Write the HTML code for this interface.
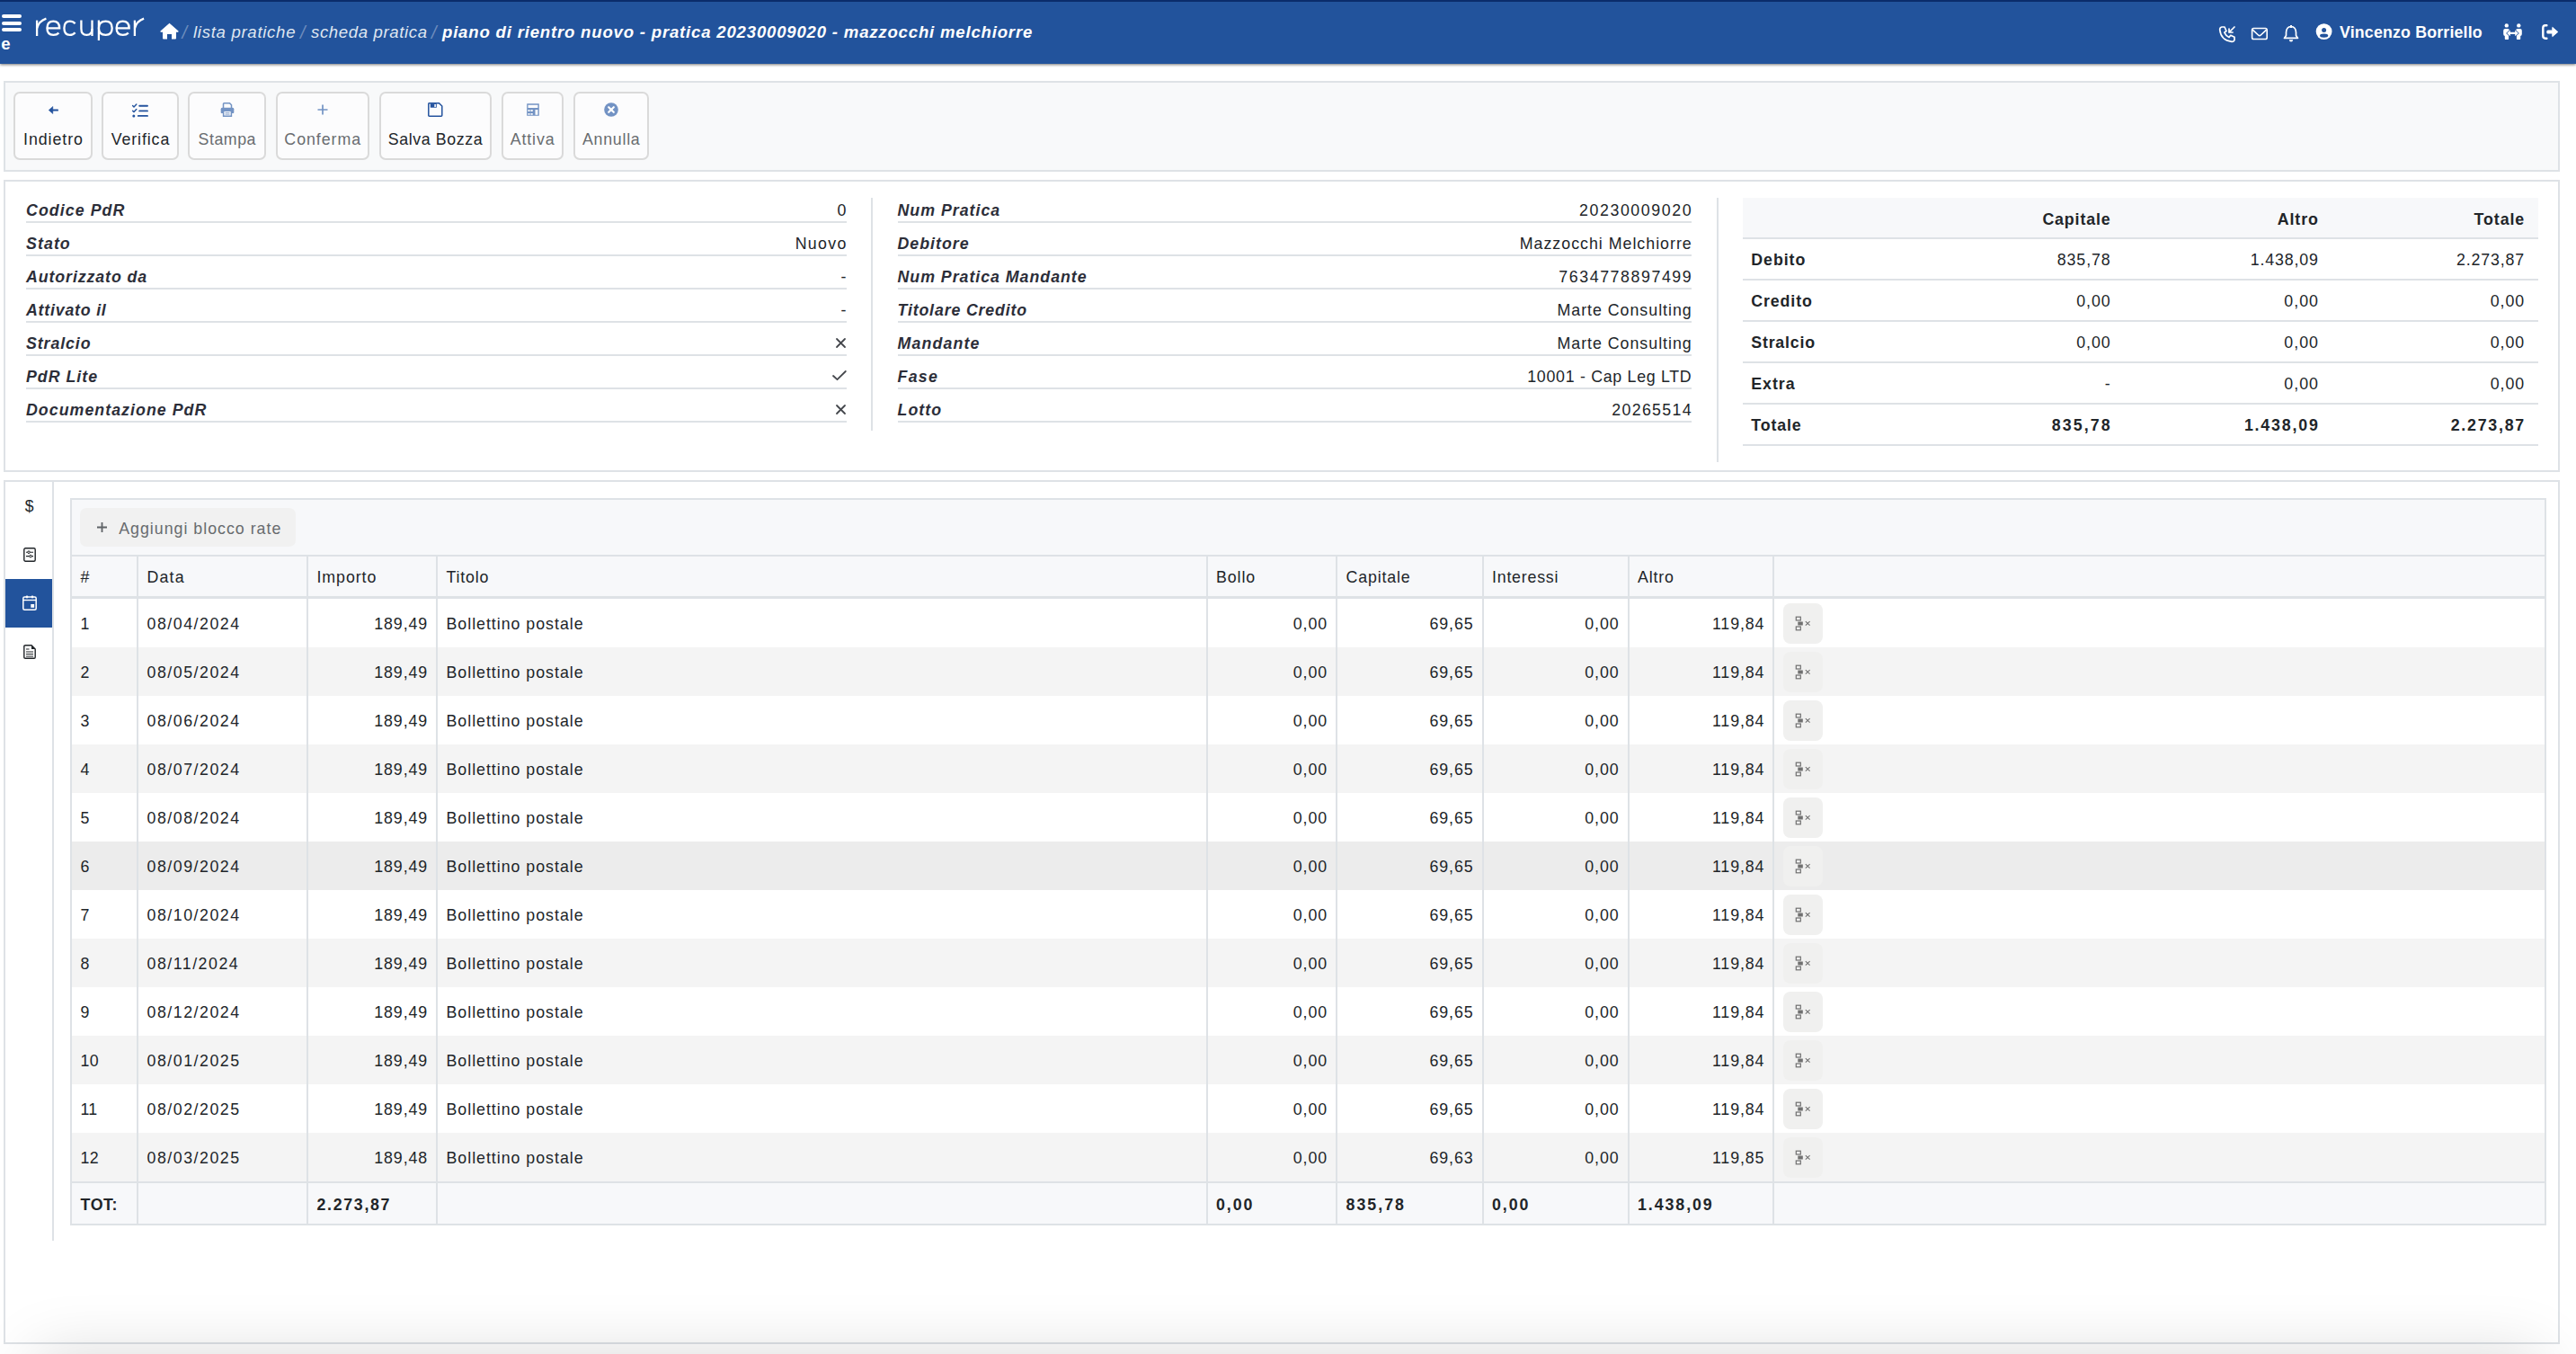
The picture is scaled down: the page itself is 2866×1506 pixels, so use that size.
<!DOCTYPE html>
<html><head><meta charset="utf-8"><title>recuper</title>
<style>
html,body{margin:0;padding:0;width:2866px;height:1506px;overflow:hidden;background:#fff;}
body{position:relative;font-family:"Liberation Sans",sans-serif;}
.t{position:absolute;line-height:1;white-space:nowrap;}
.r{position:absolute;}
.i{position:absolute;overflow:visible;}
@media (max-width:1500px){html{zoom:0.5;}}
</style></head><body>
<div class="r" style="left:0px;top:0px;width:2866px;height:71px;background:#22539c;box-shadow:0 1px 3px rgba(0,0,0,.55);z-index:2"></div>
<div class="r" style="left:0px;top:0px;width:2866px;height:1.5px;background:#0b2c6b;z-index:3"></div>
<div class="r" style="left:2px;top:16px;width:22px;height:4px;background:#fff;border-radius:2px;z-index:3"></div>
<div class="r" style="left:2px;top:24px;width:22px;height:4px;background:#fff;border-radius:2px;z-index:3"></div>
<div class="r" style="left:2px;top:31px;width:22px;height:4px;background:#fff;border-radius:2px;z-index:3"></div>
<div class="t" style="left:1.20px;top:38px;line-height:21px;font-size:18.5px;color:#fff;font-weight:bold;font-style:normal;letter-spacing:0.00px;z-index:3">e</div>
<svg class="i" style="left:0;top:0;z-index:3" width="200" height="60" viewBox="0 0 200 60"><g fill="none" stroke="#fff" stroke-width="2.3" stroke-linecap="butt"><path d="M41.1 40 L41.1 22.6"/><path d="M41.1 31.5 Q43 23.5 51.4 20.6"/><path d="M52.4 31.4 L66.2 31.4 Q66.2 23.6 59.3 23.6 Q52.4 23.6 52.4 31.3 Q52.4 38.9 59.4 38.9 Q63.2 38.9 65.4 36.6"/><path d="M83.6 26.3 Q81.4 23.6 77.6 23.6 Q71.4 23.6 71.4 31.25 Q71.4 38.9 77.6 38.9 Q81.4 38.9 83.6 36.2"/><path d="M90.4 22.5 L90.4 32 Q90.4 38.9 96.4 38.9 Q102.4 38.9 102.4 32"/><path d="M102.5 22.5 L102.5 40"/><path d="M109.9 22.5 L109.9 45"/><path d="M109.9 31.25 Q109.9 23.6 117.6 23.6 Q124.7 23.6 124.7 31.25 Q124.7 38.9 117.6 38.9 Q109.9 38.9 109.9 31.25"/><path d="M129.6 31.4 L143.7 31.4 Q143.7 23.6 136.6 23.6 Q129.6 23.6 129.6 31.3 Q129.6 38.9 136.7 38.9 Q140.6 38.9 142.8 36.6"/><path d="M149.9 40 L149.9 22.6"/><path d="M149.9 31.5 Q151.8 23.5 160.1 20.6"/></g></svg>
<svg class="i" style="left:178px;top:25px;z-index:3" width="21" height="19" viewBox="0 0 21 19"><path d="M10.5 0.8 L20.5 9.6 Q21 10.6 20 10.8 L18 10.8 L18 17.6 Q18 18.6 17 18.6 L13 18.6 L13 13 L8 13 L8 18.6 L4 18.6 Q3 18.6 3 17.6 L3 10.8 L1 10.8 Q0 10.6 0.5 9.6 Z" fill="#fff"/></svg>
<div class="t" style="left:202.50px;top:25px;line-height:22px;font-size:20px;color:rgba(255,255,255,0.35);font-weight:normal;font-style:italic;letter-spacing:0.00px;z-index:3">/</div>
<div class="t" style="left:215.00px;top:25px;line-height:21px;font-size:18.6px;color:#dfe6f1;font-weight:normal;font-style:italic;letter-spacing:0.70px;z-index:3">lista pratiche</div>
<div class="t" style="left:334.00px;top:25px;line-height:22px;font-size:20px;color:rgba(255,255,255,0.35);font-weight:normal;font-style:italic;letter-spacing:0.00px;z-index:3">/</div>
<div class="t" style="left:346.00px;top:25px;line-height:21px;font-size:18.6px;color:#dfe6f1;font-weight:normal;font-style:italic;letter-spacing:0.62px;z-index:3">scheda pratica</div>
<div class="t" style="left:480.00px;top:25px;line-height:22px;font-size:20px;color:rgba(255,255,255,0.35);font-weight:normal;font-style:italic;letter-spacing:0.00px;z-index:3">/</div>
<div class="t" style="left:492.00px;top:25px;line-height:21px;font-size:18.6px;color:#fff;font-weight:bold;font-style:italic;letter-spacing:0.80px;z-index:3">piano di rientro nuovo - pratica 20230009020 - mazzocchi melchiorre</div>
<svg class="i" style="left:2468px;top:28px;z-index:3" width="20" height="20" viewBox="0 0 20 20"><path d="M4 2 L7 2 L9 6.5 L6.8 8.2 Q8.5 12 12 13.6 L13.8 11.3 L18 13.2 L18 16.5 Q17.5 18.5 15 18.3 Q3 17 1.7 5 Q1.6 2.5 4 2 Z" fill="none" stroke="#fff" stroke-width="1.7" stroke-linejoin="round"/><path d="M18 2 L12 8 M12 4 L12 8 L16 8" fill="none" stroke="#fff" stroke-width="1.7" stroke-linecap="round" stroke-linejoin="round"/></svg>
<svg class="i" style="left:2504px;top:30px;z-index:3" width="20" height="15" viewBox="0 0 20 15"><rect x="1.6" y="1.5" width="16.6" height="12" rx="1.8" fill="none" stroke="#fff" stroke-width="1.6"/><path d="M2.2 3.2 L8.5 9 Q9.9 10.3 11.3 9 L17.6 3.2" fill="none" stroke="#fff" stroke-width="1.6"/></svg>
<svg class="i" style="left:2540px;top:28px;z-index:3" width="18" height="19" viewBox="0 0 18 19"><path d="M9 1.5 Q14.2 1.8 14.5 8 L14.5 11.5 L16.5 14.4 L1.5 14.4 L3.5 11.5 L3.5 8 Q3.8 1.8 9 1.5 Z" fill="none" stroke="#fff" stroke-width="1.7" stroke-linejoin="round"/><path d="M6.8 16.2 L11.2 16.2 Q11 18.6 9 18.6 Q7 18.6 6.8 16.2 Z" fill="#fff"/><rect x="8" y="0" width="2" height="3" fill="#fff"/></svg>
<svg class="i" style="left:2576px;top:26px;z-index:3" width="19" height="19" viewBox="0 0 19 19"><circle cx="9.6" cy="9.1" r="8.9" fill="#fff"/><circle cx="9.6" cy="7.4" r="2.5" fill="#22539c"/><ellipse cx="9.6" cy="13.6" rx="4.6" ry="2.2" fill="#22539c"/></svg>
<div class="t" style="left:2603.00px;top:26px;line-height:20px;font-size:17.8px;color:#fff;font-weight:bold;font-style:normal;letter-spacing:0.17px;z-index:3">Vincenzo Borriello</div>
<svg class="i" style="left:2784px;top:26px;z-index:3" width="23" height="19" viewBox="0 0 23 19"><circle cx="4.8" cy="2.4" r="2.2" fill="#fff"/><circle cx="18.3" cy="2.4" r="2.2" fill="#fff"/><rect x="1.2" y="6" width="6.8" height="8" rx="2" fill="#fff"/><rect x="2.8" y="10" width="4.3" height="8.1" rx="0.8" fill="#fff"/><rect x="15" y="6" width="6.8" height="8" rx="2" fill="#fff"/><rect x="15.9" y="10" width="4.3" height="8.1" rx="0.8" fill="#fff"/><path d="M5.1 10.9 L8.8 7.6 L8.8 9.8 L14.2 9.8 L14.2 7.6 L17.9 10.9 L14.2 14.2 L14.2 12 L8.8 12 L8.8 14.2 Z" fill="#fff" stroke="#22539c" stroke-width="1.4" stroke-linejoin="round" paint-order="stroke"/></svg>
<svg class="i" style="left:2827px;top:27px;z-index:3" width="20" height="17" viewBox="0 0 20 17"><path d="M6.4 1.3 L4.9 1.3 Q2.3 1.3 2.3 3.9 L2.3 13.1 Q2.3 15.7 4.9 15.7 L6.4 15.7" fill="none" stroke="#fff" stroke-width="2.4" stroke-linecap="round"/><path d="M12.8 3.4 L18.8 8.5 L12.8 13.6 Z" fill="#fff" stroke="#fff" stroke-width="1" stroke-linejoin="round"/><rect x="6.3" y="6.5" width="7" height="4" rx="1.5" fill="#fff"/></svg>
<div class="r" style="left:4px;top:90px;width:2844px;height:101px;background:#f8f9fa;box-sizing:border-box;border:2px solid #dee2e6"></div>
<div class="r" style="left:15px;top:102px;width:88px;height:76px;background:#fcfcfd;box-sizing:border-box;border:2px solid #dadada;border-radius:7px"></div>
<div class="t" style="left:-440.54px;width:1000px;text-align:center;top:145px;line-height:20px;font-size:17.8px;color:#212529;font-weight:normal;font-style:normal;letter-spacing:0.93px;">Indietro</div>
<svg class="i" style="left:54px;top:118px;" width="11" height="9" viewBox="0 0 11 9"><path d="M0.2 4.5 L4.8 0.4 L4.8 8.6 Z" fill="#24539e" stroke="#24539e" stroke-width="0.5" stroke-linejoin="round"/><rect x="4" y="3.4" width="6.9" height="2.2" rx="0.6" fill="#24539e"/></svg>
<div class="r" style="left:113px;top:102px;width:86px;height:76px;background:#fcfcfd;box-sizing:border-box;border:2px solid #dadada;border-radius:7px"></div>
<div class="t" style="left:-343.55px;width:1000px;text-align:center;top:145px;line-height:20px;font-size:17.8px;color:#212529;font-weight:normal;font-style:normal;letter-spacing:0.89px;">Verifica</div>
<svg class="i" style="left:147px;top:115px;" width="18" height="16" viewBox="0 0 18 16"><path d="M0.6 2.6 L2 4 L4.8 1" fill="none" stroke="#24539e" stroke-width="1.4" stroke-linecap="round" stroke-linejoin="round"/><path d="M0.6 8.2 L2 9.6 L4.8 6.6" fill="none" stroke="#24539e" stroke-width="1.4" stroke-linecap="round" stroke-linejoin="round"/><circle cx="1.8" cy="13.9" r="1.5" fill="#24539e"/><path d="M8.2 2.8 L17 2.8 M8.2 8.4 L17 8.4 M6.8 13.9 L17 13.9" stroke="#24539e" stroke-width="1.9" stroke-linecap="round"/></svg>
<div class="r" style="left:209px;top:102px;width:87px;height:76px;background:#fcfcfd;box-sizing:border-box;border:2px solid #dadada;border-radius:7px"></div>
<div class="t" style="left:-247.23px;width:1000px;text-align:center;top:145px;line-height:20px;font-size:17.8px;color:#696c70;font-weight:normal;font-style:normal;letter-spacing:0.55px;">Stampa</div>
<svg class="i" style="left:244.5px;top:114px;" width="16" height="16" viewBox="0 0 16 16"><path d="M3.5 6 L3.5 1.7 Q3.5 0.8 4.4 0.8 L10.5 0.8 L12.5 2.8 L12.5 6" fill="none" stroke="#7393c4" stroke-width="1.5"/><path d="M3.5 12 L1.5 12 Q0.7 12 0.7 11 L0.7 7.2 Q0.7 5.7 2.2 5.7 L13.8 5.7 Q15.3 5.7 15.3 7.2 L15.3 11 Q15.3 12 14.5 12 L12.5 12" fill="#7393c4"/><rect x="3.6" y="9.2" width="8.8" height="6" fill="#fcfcfd" stroke="#7393c4" stroke-width="1.5"/><path d="M5.5 11.5 L10.5 11.5 M5.5 13.2 L10.5 13.2" stroke="#7393c4" stroke-width="0.8"/></svg>
<div class="r" style="left:306.5px;top:102px;width:104.5px;height:76px;background:#fcfcfd;box-sizing:border-box;border:2px solid #dadada;border-radius:7px"></div>
<div class="t" style="left:-140.77px;width:1000px;text-align:center;top:145px;line-height:20px;font-size:17.8px;color:#696c70;font-weight:normal;font-style:normal;letter-spacing:0.96px;">Conferma</div>
<svg class="i" style="left:353px;top:116px;" width="12" height="12" viewBox="0 0 12 12"><path d="M6 0.5 L6 11.5 M0.5 6 L11.5 6" stroke="#7393c4" stroke-width="1.7"/></svg>
<div class="r" style="left:421.7px;top:102px;width:125.00000000000006px;height:76px;background:#fcfcfd;box-sizing:border-box;border:2px solid #dadada;border-radius:7px"></div>
<div class="t" style="left:-15.51px;width:1000px;text-align:center;top:145px;line-height:20px;font-size:17.8px;color:#212529;font-weight:normal;font-style:normal;letter-spacing:0.59px;">Salva Bozza</div>
<svg class="i" style="left:476px;top:114px;" width="17" height="16" viewBox="0 0 17 16"><path d="M1.5 0.8 L12.5 0.8 L15.8 4 L15.8 14.2 Q15.8 15.2 14.8 15.2 L1.8 15.2 Q0.8 15.2 0.8 14.2 L0.8 1.8 Q0.8 0.8 1.5 0.8 Z" fill="none" stroke="#24539e" stroke-width="1.5"/><rect x="2.8" y="1.2" width="7" height="4.5" fill="#24539e"/><rect x="7.3" y="2" width="1.6" height="3" fill="#fcfcfd"/></svg>
<div class="r" style="left:557.6px;top:102px;width:69.10000000000002px;height:76px;background:#fcfcfd;box-sizing:border-box;border:2px solid #dadada;border-radius:7px"></div>
<div class="t" style="left:92.59px;width:1000px;text-align:center;top:145px;line-height:20px;font-size:17.8px;color:#696c70;font-weight:normal;font-style:normal;letter-spacing:0.88px;">Attiva</div>
<svg class="i" style="left:585.5px;top:115px;" width="14" height="14" viewBox="0 0 14 14"><path fill-rule="evenodd" fill="#7393c4" d="M0.6 0.2 L13.4 0.2 Q13.8 0.2 13.8 0.6 L13.8 13.4 Q13.8 13.8 13.4 13.8 L0.6 13.8 Q0.2 13.8 0.2 13.4 L0.2 0.6 Q0.2 0.2 0.6 0.2 Z M1.5 1.8 L12.4 1.8 L12.4 5 L1.5 5 Z M1.5 7 L3.5 7 L3.5 9 L1.5 9 Z M4.5 7 L6.7 7 L6.7 9 L4.5 9 Z M1.5 10.9 L3.5 10.9 L3.5 12.7 L1.5 12.7 Z M4.5 10.9 L6.7 10.9 L6.7 12.7 L4.5 12.7 Z M9.5 7 L12.4 7 L12.4 12.7 L9.5 12.7 Z"/></svg>
<div class="r" style="left:637.6px;top:102px;width:84.60000000000002px;height:76px;background:#fcfcfd;box-sizing:border-box;border:2px solid #dadada;border-radius:7px"></div>
<div class="t" style="left:180.26px;width:1000px;text-align:center;top:145px;line-height:20px;font-size:17.8px;color:#696c70;font-weight:normal;font-style:normal;letter-spacing:0.73px;">Annulla</div>
<svg class="i" style="left:672px;top:114px;" width="16" height="16" viewBox="0 0 16 16"><circle cx="8" cy="8" r="7.8" fill="#7393c4"/><path d="M5.2 5.2 L10.8 10.8 M10.8 5.2 L5.2 10.8" stroke="#fff" stroke-width="2.2" stroke-linecap="round"/></svg>
<div class="r" style="left:4px;top:200px;width:2844px;height:325px;background:#fff;box-sizing:border-box;border:2px solid #dee2e6"></div>
<div class="t" style="left:29.00px;top:224px;line-height:20px;font-size:17.8px;color:#2c2e39;font-weight:bold;font-style:italic;letter-spacing:1.06px;">Codice PdR</div>
<div class="r" style="left:29px;top:246px;width:913px;height:2px;background:#dee2e6;"></div>
<div class="t" style="right:1924.50px;top:224px;line-height:20px;font-size:17.8px;color:#212529;font-weight:normal;font-style:normal;letter-spacing:0.00px;">0</div>
<div class="t" style="left:29.00px;top:261px;line-height:20px;font-size:17.8px;color:#2c2e39;font-weight:bold;font-style:italic;letter-spacing:1.07px;">Stato</div>
<div class="r" style="left:29px;top:283px;width:913px;height:2px;background:#dee2e6;"></div>
<div class="t" style="right:1923.13px;top:261px;line-height:20px;font-size:17.8px;color:#212529;font-weight:normal;font-style:normal;letter-spacing:1.37px;">Nuovo</div>
<div class="t" style="left:29.00px;top:298px;line-height:20px;font-size:17.8px;color:#2c2e39;font-weight:bold;font-style:italic;letter-spacing:0.90px;">Autorizzato da</div>
<div class="r" style="left:29px;top:320px;width:913px;height:2px;background:#dee2e6;"></div>
<div class="t" style="right:1924.50px;top:298px;line-height:20px;font-size:17.8px;color:#212529;font-weight:normal;font-style:normal;letter-spacing:0.00px;">-</div>
<div class="t" style="left:29.00px;top:335px;line-height:20px;font-size:17.8px;color:#2c2e39;font-weight:bold;font-style:italic;letter-spacing:0.78px;">Attivato il</div>
<div class="r" style="left:29px;top:357px;width:913px;height:2px;background:#dee2e6;"></div>
<div class="t" style="right:1924.50px;top:335px;line-height:20px;font-size:17.8px;color:#212529;font-weight:normal;font-style:normal;letter-spacing:0.00px;">-</div>
<div class="t" style="left:29.00px;top:372px;line-height:20px;font-size:17.8px;color:#2c2e39;font-weight:bold;font-style:italic;letter-spacing:0.90px;">Stralcio</div>
<div class="r" style="left:29px;top:394px;width:913px;height:2px;background:#dee2e6;"></div>
<svg class="i" style="left:930px;top:375.7px;" width="11" height="11" viewBox="0 0 11 11"><path d="M1 1 L10 10 M10 1 L1 10" stroke="#45484d" stroke-width="1.8" stroke-linecap="round"/></svg>
<div class="t" style="left:29.00px;top:409px;line-height:20px;font-size:17.8px;color:#2c2e39;font-weight:bold;font-style:italic;letter-spacing:0.99px;">PdR Lite</div>
<div class="r" style="left:29px;top:431px;width:913px;height:2px;background:#dee2e6;"></div>
<svg class="i" style="left:926px;top:412.2px;" width="16" height="12" viewBox="0 0 16 12"><path d="M1 6 L5.5 10.2 L14.8 1" fill="none" stroke="#45484d" stroke-width="1.8" stroke-linecap="round" stroke-linejoin="round"/></svg>
<div class="t" style="left:29.00px;top:446px;line-height:20px;font-size:17.8px;color:#2c2e39;font-weight:bold;font-style:italic;letter-spacing:1.03px;">Documentazione PdR</div>
<div class="r" style="left:29px;top:468px;width:913px;height:2px;background:#dee2e6;"></div>
<svg class="i" style="left:930px;top:449.7px;" width="11" height="11" viewBox="0 0 11 11"><path d="M1 1 L10 10 M10 1 L1 10" stroke="#45484d" stroke-width="1.8" stroke-linecap="round"/></svg>
<div class="r" style="left:968.5px;top:220px;width:2.0px;height:259px;background:#dee2e6;"></div>
<div class="t" style="left:998.50px;top:224px;line-height:20px;font-size:17.8px;color:#2c2e39;font-weight:bold;font-style:italic;letter-spacing:1.00px;">Num Pratica</div>
<div class="r" style="left:998.5px;top:246px;width:883.5px;height:2px;background:#dee2e6;"></div>
<div class="t" style="right:982.70px;top:224px;line-height:20px;font-size:17.8px;color:#212529;font-weight:normal;font-style:normal;letter-spacing:1.60px;">20230009020</div>
<div class="t" style="left:998.50px;top:261px;line-height:20px;font-size:17.8px;color:#2c2e39;font-weight:bold;font-style:italic;letter-spacing:0.99px;">Debitore</div>
<div class="r" style="left:998.5px;top:283px;width:883.5px;height:2px;background:#dee2e6;"></div>
<div class="t" style="right:983.30px;top:261px;line-height:20px;font-size:17.8px;color:#212529;font-weight:normal;font-style:normal;letter-spacing:1.00px;">Mazzocchi Melchiorre</div>
<div class="t" style="left:998.50px;top:298px;line-height:20px;font-size:17.8px;color:#2c2e39;font-weight:bold;font-style:italic;letter-spacing:0.97px;">Num Pratica Mandante</div>
<div class="r" style="left:998.5px;top:320px;width:883.5px;height:2px;background:#dee2e6;"></div>
<div class="t" style="right:982.73px;top:298px;line-height:20px;font-size:17.8px;color:#212529;font-weight:normal;font-style:normal;letter-spacing:1.57px;">7634778897499</div>
<div class="t" style="left:998.50px;top:335px;line-height:20px;font-size:17.8px;color:#2c2e39;font-weight:bold;font-style:italic;letter-spacing:0.84px;">Titolare Credito</div>
<div class="r" style="left:998.5px;top:357px;width:883.5px;height:2px;background:#dee2e6;"></div>
<div class="t" style="right:983.31px;top:335px;line-height:20px;font-size:17.8px;color:#212529;font-weight:normal;font-style:normal;letter-spacing:0.99px;">Marte Consulting</div>
<div class="t" style="left:998.50px;top:372px;line-height:20px;font-size:17.8px;color:#2c2e39;font-weight:bold;font-style:italic;letter-spacing:1.14px;">Mandante</div>
<div class="r" style="left:998.5px;top:394px;width:883.5px;height:2px;background:#dee2e6;"></div>
<div class="t" style="right:983.31px;top:372px;line-height:20px;font-size:17.8px;color:#212529;font-weight:normal;font-style:normal;letter-spacing:0.99px;">Marte Consulting</div>
<div class="t" style="left:998.50px;top:409px;line-height:20px;font-size:17.8px;color:#2c2e39;font-weight:bold;font-style:italic;letter-spacing:1.30px;">Fase</div>
<div class="r" style="left:998.5px;top:431px;width:883.5px;height:2px;background:#dee2e6;"></div>
<div class="t" style="right:983.59px;top:409px;line-height:20px;font-size:17.8px;color:#212529;font-weight:normal;font-style:normal;letter-spacing:0.71px;">10001 - Cap Leg LTD</div>
<div class="t" style="left:998.50px;top:446px;line-height:20px;font-size:17.8px;color:#2c2e39;font-weight:bold;font-style:italic;letter-spacing:1.06px;">Lotto</div>
<div class="r" style="left:998.5px;top:468px;width:883.5px;height:2px;background:#dee2e6;"></div>
<div class="t" style="right:982.96px;top:446px;line-height:20px;font-size:17.8px;color:#212529;font-weight:normal;font-style:normal;letter-spacing:1.34px;">20265514</div>
<div class="r" style="left:1910px;top:220px;width:2px;height:294px;background:#dee2e6;"></div>
<div class="r" style="left:1939px;top:220px;width:884.5px;height:44px;background:#f7f8fa;"></div>
<div class="r" style="left:1939px;top:264px;width:884.5px;height:2px;background:#dee2e6;"></div>
<div class="t" style="right:517.42px;top:234px;line-height:20px;font-size:17.8px;color:#212529;font-weight:bold;font-style:normal;letter-spacing:0.88px;">Capitale</div>
<div class="t" style="right:286.18px;top:234px;line-height:20px;font-size:17.8px;color:#212529;font-weight:bold;font-style:normal;letter-spacing:0.92px;">Altro</div>
<div class="t" style="right:56.89px;top:234px;line-height:20px;font-size:17.8px;color:#212529;font-weight:bold;font-style:normal;letter-spacing:0.91px;">Totale</div>
<div class="t" style="left:1948.30px;top:279px;line-height:20px;font-size:17.8px;color:#212529;font-weight:bold;font-style:normal;letter-spacing:0.94px;">Debito</div>
<div class="t" style="right:517.37px;top:279px;line-height:20px;font-size:17.8px;color:#212529;font-weight:normal;font-style:normal;letter-spacing:0.93px;">835,78</div>
<div class="t" style="right:286.26px;top:279px;line-height:20px;font-size:17.8px;color:#212529;font-weight:normal;font-style:normal;letter-spacing:0.84px;">1.438,09</div>
<div class="t" style="right:56.96px;top:279px;line-height:20px;font-size:17.8px;color:#212529;font-weight:normal;font-style:normal;letter-spacing:0.84px;">2.273,87</div>
<div class="r" style="left:1939px;top:310px;width:884.5px;height:2px;background:#dee2e6;"></div>
<div class="t" style="left:1948.30px;top:325px;line-height:20px;font-size:17.8px;color:#212529;font-weight:bold;font-style:normal;letter-spacing:0.89px;">Credito</div>
<div class="t" style="right:517.32px;top:325px;line-height:20px;font-size:17.8px;color:#212529;font-weight:normal;font-style:normal;letter-spacing:0.98px;">0,00</div>
<div class="t" style="right:286.12px;top:325px;line-height:20px;font-size:17.8px;color:#212529;font-weight:normal;font-style:normal;letter-spacing:0.98px;">0,00</div>
<div class="t" style="right:56.82px;top:325px;line-height:20px;font-size:17.8px;color:#212529;font-weight:normal;font-style:normal;letter-spacing:0.98px;">0,00</div>
<div class="r" style="left:1939px;top:356px;width:884.5px;height:2px;background:#dee2e6;"></div>
<div class="t" style="left:1948.30px;top:371px;line-height:20px;font-size:17.8px;color:#212529;font-weight:bold;font-style:normal;letter-spacing:0.79px;">Stralcio</div>
<div class="t" style="right:517.32px;top:371px;line-height:20px;font-size:17.8px;color:#212529;font-weight:normal;font-style:normal;letter-spacing:0.98px;">0,00</div>
<div class="t" style="right:286.12px;top:371px;line-height:20px;font-size:17.8px;color:#212529;font-weight:normal;font-style:normal;letter-spacing:0.98px;">0,00</div>
<div class="t" style="right:56.82px;top:371px;line-height:20px;font-size:17.8px;color:#212529;font-weight:normal;font-style:normal;letter-spacing:0.98px;">0,00</div>
<div class="r" style="left:1939px;top:402px;width:884.5px;height:2px;background:#dee2e6;"></div>
<div class="t" style="left:1948.30px;top:417px;line-height:20px;font-size:17.8px;color:#212529;font-weight:bold;font-style:normal;letter-spacing:0.95px;">Extra</div>
<div class="t" style="right:518.30px;top:417px;line-height:20px;font-size:17.8px;color:#212529;font-weight:normal;font-style:normal;letter-spacing:0.00px;">-</div>
<div class="t" style="right:286.12px;top:417px;line-height:20px;font-size:17.8px;color:#212529;font-weight:normal;font-style:normal;letter-spacing:0.98px;">0,00</div>
<div class="t" style="right:56.82px;top:417px;line-height:20px;font-size:17.8px;color:#212529;font-weight:normal;font-style:normal;letter-spacing:0.98px;">0,00</div>
<div class="r" style="left:1939px;top:448px;width:884.5px;height:2px;background:#dee2e6;"></div>
<div class="t" style="left:1948.30px;top:463px;line-height:20px;font-size:17.8px;color:#212529;font-weight:bold;font-style:normal;letter-spacing:0.87px;">Totale</div>
<div class="t" style="right:516.18px;top:463px;line-height:20px;font-size:17.8px;color:#212529;font-weight:bold;font-style:normal;letter-spacing:2.12px;">835,78</div>
<div class="t" style="right:285.27px;top:463px;line-height:20px;font-size:17.8px;color:#212529;font-weight:bold;font-style:normal;letter-spacing:1.83px;">1.438,09</div>
<div class="t" style="right:56.05px;top:463px;line-height:20px;font-size:17.8px;color:#212529;font-weight:bold;font-style:normal;letter-spacing:1.75px;">2.273,87</div>
<div class="r" style="left:1939px;top:494px;width:884.5px;height:2px;background:#dee2e6;"></div>
<div class="r" style="left:4px;top:534px;width:2844px;height:961px;background:#fff;box-sizing:border-box;border:2px solid #dee2e6"></div>
<div class="r" style="left:58px;top:536px;width:2px;height:844px;background:#dee2e6;"></div>
<div class="r" style="left:6px;top:644px;width:52px;height:54px;background:#22539c;"></div>
<div class="t" style="left:-467.50px;width:1000px;text-align:center;top:553px;line-height:20px;font-size:17.5px;color:#212529;font-weight:normal;font-style:normal;letter-spacing:0.00px;">$</div>
<svg class="i" style="left:26px;top:609px;" width="14" height="16" viewBox="0 0 14 16"><rect x="0.8" y="0.8" width="12.4" height="14.4" rx="1.5" fill="none" stroke="#212529" stroke-width="1.4"/><path d="M3 5.2 L11 5.2 M3 9.6 L11 9.6" stroke="#212529" stroke-width="1.1"/><circle cx="6" cy="5.2" r="1.3" fill="#fff" stroke="#212529" stroke-width="1"/><circle cx="8" cy="9.6" r="1.3" fill="#fff" stroke="#212529" stroke-width="1"/></svg>
<svg class="i" style="left:25px;top:662px;" width="16" height="17" viewBox="0 0 16 17"><rect x="0.8" y="2" width="14.4" height="14.2" rx="1.5" fill="none" stroke="#fff" stroke-width="1.5"/><path d="M0.8 5.5 L15.2 5.5" stroke="#fff" stroke-width="1.4"/><circle cx="5" cy="2" r="1.4" fill="#fff"/><circle cx="11" cy="2" r="1.4" fill="#fff"/><rect x="9.3" y="10" width="3.8" height="3.8" fill="#fff"/></svg>
<svg class="i" style="left:26px;top:717px;" width="14" height="16" viewBox="0 0 14 16"><path d="M2.2 0.8 L9 0.8 L13.2 5 L13.2 14 Q13.2 15.2 12 15.2 L2.2 15.2 Q0.8 15.2 0.8 14 L0.8 2 Q0.8 0.8 2.2 0.8 Z" fill="none" stroke="#212529" stroke-width="1.4"/><path d="M9 0.8 L9 5 L13.2 5" fill="#212529"/><path d="M3 5 L6.5 5 M3 8 L11 8 M3 10.5 L11 10.5 M3 13 L11 13" stroke="#212529" stroke-width="1.1"/></svg>
<div class="r" style="left:78px;top:554px;width:2755px;height:809px;background:#fff;box-sizing:border-box;border:2px solid #dee2e6"></div>
<div class="r" style="left:80px;top:556px;width:2751px;height:61px;background:#f7f8fa;"></div>
<div class="r" style="left:80px;top:617px;width:2751px;height:2px;background:#dee2e6;"></div>
<div class="r" style="left:89px;top:565px;width:240px;height:43px;background:#f1f1f1;border-radius:7px"></div>
<svg class="i" style="left:108px;top:580.5px;" width="11" height="11" viewBox="0 0 11 11"><path d="M5.5 0 L5.5 11 M0 5.5 L11 5.5" stroke="#5f6367" stroke-width="1.8"/></svg>
<div class="t" style="left:132.20px;top:578px;line-height:20px;font-size:17.8px;color:#686b6e;font-weight:normal;font-style:normal;letter-spacing:1.00px;">Aggiungi blocco rate</div>
<div class="r" style="left:80px;top:619px;width:2751px;height:44px;background:#f7f8fa;"></div>
<div class="r" style="left:80px;top:663px;width:2751px;height:3px;background:#dee2e6;"></div>
<div class="t" style="left:89.50px;top:632px;line-height:20px;font-size:17.8px;color:#212529;font-weight:normal;font-style:normal;letter-spacing:0.00px;">#</div>
<div class="t" style="left:163.50px;top:632px;line-height:20px;font-size:17.8px;color:#212529;font-weight:normal;font-style:normal;letter-spacing:1.16px;">Data</div>
<div class="t" style="left:352.50px;top:632px;line-height:20px;font-size:17.8px;color:#212529;font-weight:normal;font-style:normal;letter-spacing:0.93px;">Importo</div>
<div class="t" style="left:496.50px;top:632px;line-height:20px;font-size:17.8px;color:#212529;font-weight:normal;font-style:normal;letter-spacing:0.79px;">Titolo</div>
<div class="t" style="left:1353.00px;top:632px;line-height:20px;font-size:17.8px;color:#212529;font-weight:normal;font-style:normal;letter-spacing:0.91px;">Bollo</div>
<div class="t" style="left:1497.50px;top:632px;line-height:20px;font-size:17.8px;color:#212529;font-weight:normal;font-style:normal;letter-spacing:0.86px;">Capitale</div>
<div class="t" style="left:1660.00px;top:632px;line-height:20px;font-size:17.8px;color:#212529;font-weight:normal;font-style:normal;letter-spacing:0.78px;">Interessi</div>
<div class="t" style="left:1822.00px;top:632px;line-height:20px;font-size:17.8px;color:#212529;font-weight:normal;font-style:normal;letter-spacing:0.85px;">Altro</div>
<div class="r" style="left:80px;top:666px;width:2751px;height:54px;background:#ffffff;"></div>
<div class="t" style="left:89.50px;top:684px;line-height:20px;font-size:17.8px;color:#212529;font-weight:normal;font-style:normal;letter-spacing:0.30px;">1</div>
<div class="t" style="left:163.50px;top:684px;line-height:20px;font-size:17.8px;color:#212529;font-weight:normal;font-style:normal;letter-spacing:1.52px;">08/04/2024</div>
<div class="t" style="right:2389.87px;top:684px;line-height:20px;font-size:17.8px;color:#212529;font-weight:normal;font-style:normal;letter-spacing:0.93px;">189,49</div>
<div class="t" style="left:496.50px;top:684px;line-height:20px;font-size:17.8px;color:#212529;font-weight:normal;font-style:normal;letter-spacing:0.98px;">Bollettino postale</div>
<div class="t" style="right:1388.82px;top:684px;line-height:20px;font-size:17.8px;color:#212529;font-weight:normal;font-style:normal;letter-spacing:0.98px;">0,00</div>
<div class="t" style="right:1226.35px;top:684px;line-height:20px;font-size:17.8px;color:#212529;font-weight:normal;font-style:normal;letter-spacing:0.95px;">69,65</div>
<div class="t" style="right:1064.32px;top:684px;line-height:20px;font-size:17.8px;color:#212529;font-weight:normal;font-style:normal;letter-spacing:0.98px;">0,00</div>
<div class="t" style="right:902.59px;top:684px;line-height:20px;font-size:17.8px;color:#212529;font-weight:normal;font-style:normal;letter-spacing:0.91px;">119,84</div>
<div class="r" style="left:1984.3px;top:671px;width:43.700000000000045px;height:45px;background:#f0f0ef;border-radius:8px"></div>
<svg class="i" style="left:1997px;top:684.5px;" width="18" height="17" viewBox="0 0 18 17"><rect x="1.3" y="1.2" width="5" height="3.8" fill="none" stroke="#707070" stroke-width="1.2"/><rect x="3.3" y="6.5" width="5.5" height="4" fill="#707070"/><rect x="1.3" y="12" width="5" height="3.8" fill="none" stroke="#707070" stroke-width="1.2"/><path d="M11.8 6.2 L16.6 10.6 M16.6 6.2 L11.8 10.6" stroke="#707070" stroke-width="1.1"/></svg>
<div class="r" style="left:80px;top:720px;width:2751px;height:54px;background:#f4f4f4;"></div>
<div class="t" style="left:89.50px;top:738px;line-height:20px;font-size:17.8px;color:#212529;font-weight:normal;font-style:normal;letter-spacing:0.30px;">2</div>
<div class="t" style="left:163.50px;top:738px;line-height:20px;font-size:17.8px;color:#212529;font-weight:normal;font-style:normal;letter-spacing:1.52px;">08/05/2024</div>
<div class="t" style="right:2389.87px;top:738px;line-height:20px;font-size:17.8px;color:#212529;font-weight:normal;font-style:normal;letter-spacing:0.93px;">189,49</div>
<div class="t" style="left:496.50px;top:738px;line-height:20px;font-size:17.8px;color:#212529;font-weight:normal;font-style:normal;letter-spacing:0.98px;">Bollettino postale</div>
<div class="t" style="right:1388.82px;top:738px;line-height:20px;font-size:17.8px;color:#212529;font-weight:normal;font-style:normal;letter-spacing:0.98px;">0,00</div>
<div class="t" style="right:1226.35px;top:738px;line-height:20px;font-size:17.8px;color:#212529;font-weight:normal;font-style:normal;letter-spacing:0.95px;">69,65</div>
<div class="t" style="right:1064.32px;top:738px;line-height:20px;font-size:17.8px;color:#212529;font-weight:normal;font-style:normal;letter-spacing:0.98px;">0,00</div>
<div class="t" style="right:902.59px;top:738px;line-height:20px;font-size:17.8px;color:#212529;font-weight:normal;font-style:normal;letter-spacing:0.91px;">119,84</div>
<div class="r" style="left:1984.3px;top:725px;width:43.700000000000045px;height:45px;background:#f0f0ef;border-radius:8px"></div>
<svg class="i" style="left:1997px;top:738.5px;" width="18" height="17" viewBox="0 0 18 17"><rect x="1.3" y="1.2" width="5" height="3.8" fill="none" stroke="#707070" stroke-width="1.2"/><rect x="3.3" y="6.5" width="5.5" height="4" fill="#707070"/><rect x="1.3" y="12" width="5" height="3.8" fill="none" stroke="#707070" stroke-width="1.2"/><path d="M11.8 6.2 L16.6 10.6 M16.6 6.2 L11.8 10.6" stroke="#707070" stroke-width="1.1"/></svg>
<div class="r" style="left:80px;top:774px;width:2751px;height:54px;background:#ffffff;"></div>
<div class="t" style="left:89.50px;top:792px;line-height:20px;font-size:17.8px;color:#212529;font-weight:normal;font-style:normal;letter-spacing:0.30px;">3</div>
<div class="t" style="left:163.50px;top:792px;line-height:20px;font-size:17.8px;color:#212529;font-weight:normal;font-style:normal;letter-spacing:1.52px;">08/06/2024</div>
<div class="t" style="right:2389.87px;top:792px;line-height:20px;font-size:17.8px;color:#212529;font-weight:normal;font-style:normal;letter-spacing:0.93px;">189,49</div>
<div class="t" style="left:496.50px;top:792px;line-height:20px;font-size:17.8px;color:#212529;font-weight:normal;font-style:normal;letter-spacing:0.98px;">Bollettino postale</div>
<div class="t" style="right:1388.82px;top:792px;line-height:20px;font-size:17.8px;color:#212529;font-weight:normal;font-style:normal;letter-spacing:0.98px;">0,00</div>
<div class="t" style="right:1226.35px;top:792px;line-height:20px;font-size:17.8px;color:#212529;font-weight:normal;font-style:normal;letter-spacing:0.95px;">69,65</div>
<div class="t" style="right:1064.32px;top:792px;line-height:20px;font-size:17.8px;color:#212529;font-weight:normal;font-style:normal;letter-spacing:0.98px;">0,00</div>
<div class="t" style="right:902.59px;top:792px;line-height:20px;font-size:17.8px;color:#212529;font-weight:normal;font-style:normal;letter-spacing:0.91px;">119,84</div>
<div class="r" style="left:1984.3px;top:779px;width:43.700000000000045px;height:45px;background:#f0f0ef;border-radius:8px"></div>
<svg class="i" style="left:1997px;top:792.5px;" width="18" height="17" viewBox="0 0 18 17"><rect x="1.3" y="1.2" width="5" height="3.8" fill="none" stroke="#707070" stroke-width="1.2"/><rect x="3.3" y="6.5" width="5.5" height="4" fill="#707070"/><rect x="1.3" y="12" width="5" height="3.8" fill="none" stroke="#707070" stroke-width="1.2"/><path d="M11.8 6.2 L16.6 10.6 M16.6 6.2 L11.8 10.6" stroke="#707070" stroke-width="1.1"/></svg>
<div class="r" style="left:80px;top:828px;width:2751px;height:54px;background:#f4f4f4;"></div>
<div class="t" style="left:89.50px;top:846px;line-height:20px;font-size:17.8px;color:#212529;font-weight:normal;font-style:normal;letter-spacing:0.30px;">4</div>
<div class="t" style="left:163.50px;top:846px;line-height:20px;font-size:17.8px;color:#212529;font-weight:normal;font-style:normal;letter-spacing:1.52px;">08/07/2024</div>
<div class="t" style="right:2389.87px;top:846px;line-height:20px;font-size:17.8px;color:#212529;font-weight:normal;font-style:normal;letter-spacing:0.93px;">189,49</div>
<div class="t" style="left:496.50px;top:846px;line-height:20px;font-size:17.8px;color:#212529;font-weight:normal;font-style:normal;letter-spacing:0.98px;">Bollettino postale</div>
<div class="t" style="right:1388.82px;top:846px;line-height:20px;font-size:17.8px;color:#212529;font-weight:normal;font-style:normal;letter-spacing:0.98px;">0,00</div>
<div class="t" style="right:1226.35px;top:846px;line-height:20px;font-size:17.8px;color:#212529;font-weight:normal;font-style:normal;letter-spacing:0.95px;">69,65</div>
<div class="t" style="right:1064.32px;top:846px;line-height:20px;font-size:17.8px;color:#212529;font-weight:normal;font-style:normal;letter-spacing:0.98px;">0,00</div>
<div class="t" style="right:902.59px;top:846px;line-height:20px;font-size:17.8px;color:#212529;font-weight:normal;font-style:normal;letter-spacing:0.91px;">119,84</div>
<div class="r" style="left:1984.3px;top:833px;width:43.700000000000045px;height:45px;background:#f0f0ef;border-radius:8px"></div>
<svg class="i" style="left:1997px;top:846.5px;" width="18" height="17" viewBox="0 0 18 17"><rect x="1.3" y="1.2" width="5" height="3.8" fill="none" stroke="#707070" stroke-width="1.2"/><rect x="3.3" y="6.5" width="5.5" height="4" fill="#707070"/><rect x="1.3" y="12" width="5" height="3.8" fill="none" stroke="#707070" stroke-width="1.2"/><path d="M11.8 6.2 L16.6 10.6 M16.6 6.2 L11.8 10.6" stroke="#707070" stroke-width="1.1"/></svg>
<div class="r" style="left:80px;top:882px;width:2751px;height:54px;background:#ffffff;"></div>
<div class="t" style="left:89.50px;top:900px;line-height:20px;font-size:17.8px;color:#212529;font-weight:normal;font-style:normal;letter-spacing:0.30px;">5</div>
<div class="t" style="left:163.50px;top:900px;line-height:20px;font-size:17.8px;color:#212529;font-weight:normal;font-style:normal;letter-spacing:1.52px;">08/08/2024</div>
<div class="t" style="right:2389.87px;top:900px;line-height:20px;font-size:17.8px;color:#212529;font-weight:normal;font-style:normal;letter-spacing:0.93px;">189,49</div>
<div class="t" style="left:496.50px;top:900px;line-height:20px;font-size:17.8px;color:#212529;font-weight:normal;font-style:normal;letter-spacing:0.98px;">Bollettino postale</div>
<div class="t" style="right:1388.82px;top:900px;line-height:20px;font-size:17.8px;color:#212529;font-weight:normal;font-style:normal;letter-spacing:0.98px;">0,00</div>
<div class="t" style="right:1226.35px;top:900px;line-height:20px;font-size:17.8px;color:#212529;font-weight:normal;font-style:normal;letter-spacing:0.95px;">69,65</div>
<div class="t" style="right:1064.32px;top:900px;line-height:20px;font-size:17.8px;color:#212529;font-weight:normal;font-style:normal;letter-spacing:0.98px;">0,00</div>
<div class="t" style="right:902.59px;top:900px;line-height:20px;font-size:17.8px;color:#212529;font-weight:normal;font-style:normal;letter-spacing:0.91px;">119,84</div>
<div class="r" style="left:1984.3px;top:887px;width:43.700000000000045px;height:45px;background:#f0f0ef;border-radius:8px"></div>
<svg class="i" style="left:1997px;top:900.5px;" width="18" height="17" viewBox="0 0 18 17"><rect x="1.3" y="1.2" width="5" height="3.8" fill="none" stroke="#707070" stroke-width="1.2"/><rect x="3.3" y="6.5" width="5.5" height="4" fill="#707070"/><rect x="1.3" y="12" width="5" height="3.8" fill="none" stroke="#707070" stroke-width="1.2"/><path d="M11.8 6.2 L16.6 10.6 M16.6 6.2 L11.8 10.6" stroke="#707070" stroke-width="1.1"/></svg>
<div class="r" style="left:80px;top:936px;width:2751px;height:54px;background:#ececec;"></div>
<div class="t" style="left:89.50px;top:954px;line-height:20px;font-size:17.8px;color:#212529;font-weight:normal;font-style:normal;letter-spacing:0.30px;">6</div>
<div class="t" style="left:163.50px;top:954px;line-height:20px;font-size:17.8px;color:#212529;font-weight:normal;font-style:normal;letter-spacing:1.52px;">08/09/2024</div>
<div class="t" style="right:2389.87px;top:954px;line-height:20px;font-size:17.8px;color:#212529;font-weight:normal;font-style:normal;letter-spacing:0.93px;">189,49</div>
<div class="t" style="left:496.50px;top:954px;line-height:20px;font-size:17.8px;color:#212529;font-weight:normal;font-style:normal;letter-spacing:0.98px;">Bollettino postale</div>
<div class="t" style="right:1388.82px;top:954px;line-height:20px;font-size:17.8px;color:#212529;font-weight:normal;font-style:normal;letter-spacing:0.98px;">0,00</div>
<div class="t" style="right:1226.35px;top:954px;line-height:20px;font-size:17.8px;color:#212529;font-weight:normal;font-style:normal;letter-spacing:0.95px;">69,65</div>
<div class="t" style="right:1064.32px;top:954px;line-height:20px;font-size:17.8px;color:#212529;font-weight:normal;font-style:normal;letter-spacing:0.98px;">0,00</div>
<div class="t" style="right:902.59px;top:954px;line-height:20px;font-size:17.8px;color:#212529;font-weight:normal;font-style:normal;letter-spacing:0.91px;">119,84</div>
<div class="r" style="left:1984.3px;top:941px;width:43.700000000000045px;height:45px;background:#f0f0ef;border-radius:8px"></div>
<svg class="i" style="left:1997px;top:954.5px;" width="18" height="17" viewBox="0 0 18 17"><rect x="1.3" y="1.2" width="5" height="3.8" fill="none" stroke="#707070" stroke-width="1.2"/><rect x="3.3" y="6.5" width="5.5" height="4" fill="#707070"/><rect x="1.3" y="12" width="5" height="3.8" fill="none" stroke="#707070" stroke-width="1.2"/><path d="M11.8 6.2 L16.6 10.6 M16.6 6.2 L11.8 10.6" stroke="#707070" stroke-width="1.1"/></svg>
<div class="r" style="left:80px;top:990px;width:2751px;height:54px;background:#ffffff;"></div>
<div class="t" style="left:89.50px;top:1008px;line-height:20px;font-size:17.8px;color:#212529;font-weight:normal;font-style:normal;letter-spacing:0.30px;">7</div>
<div class="t" style="left:163.50px;top:1008px;line-height:20px;font-size:17.8px;color:#212529;font-weight:normal;font-style:normal;letter-spacing:1.52px;">08/10/2024</div>
<div class="t" style="right:2389.87px;top:1008px;line-height:20px;font-size:17.8px;color:#212529;font-weight:normal;font-style:normal;letter-spacing:0.93px;">189,49</div>
<div class="t" style="left:496.50px;top:1008px;line-height:20px;font-size:17.8px;color:#212529;font-weight:normal;font-style:normal;letter-spacing:0.98px;">Bollettino postale</div>
<div class="t" style="right:1388.82px;top:1008px;line-height:20px;font-size:17.8px;color:#212529;font-weight:normal;font-style:normal;letter-spacing:0.98px;">0,00</div>
<div class="t" style="right:1226.35px;top:1008px;line-height:20px;font-size:17.8px;color:#212529;font-weight:normal;font-style:normal;letter-spacing:0.95px;">69,65</div>
<div class="t" style="right:1064.32px;top:1008px;line-height:20px;font-size:17.8px;color:#212529;font-weight:normal;font-style:normal;letter-spacing:0.98px;">0,00</div>
<div class="t" style="right:902.59px;top:1008px;line-height:20px;font-size:17.8px;color:#212529;font-weight:normal;font-style:normal;letter-spacing:0.91px;">119,84</div>
<div class="r" style="left:1984.3px;top:995px;width:43.700000000000045px;height:45px;background:#f0f0ef;border-radius:8px"></div>
<svg class="i" style="left:1997px;top:1008.5px;" width="18" height="17" viewBox="0 0 18 17"><rect x="1.3" y="1.2" width="5" height="3.8" fill="none" stroke="#707070" stroke-width="1.2"/><rect x="3.3" y="6.5" width="5.5" height="4" fill="#707070"/><rect x="1.3" y="12" width="5" height="3.8" fill="none" stroke="#707070" stroke-width="1.2"/><path d="M11.8 6.2 L16.6 10.6 M16.6 6.2 L11.8 10.6" stroke="#707070" stroke-width="1.1"/></svg>
<div class="r" style="left:80px;top:1044px;width:2751px;height:54px;background:#f4f4f4;"></div>
<div class="t" style="left:89.50px;top:1062px;line-height:20px;font-size:17.8px;color:#212529;font-weight:normal;font-style:normal;letter-spacing:0.30px;">8</div>
<div class="t" style="left:163.50px;top:1062px;line-height:20px;font-size:17.8px;color:#212529;font-weight:normal;font-style:normal;letter-spacing:1.50px;">08/11/2024</div>
<div class="t" style="right:2389.87px;top:1062px;line-height:20px;font-size:17.8px;color:#212529;font-weight:normal;font-style:normal;letter-spacing:0.93px;">189,49</div>
<div class="t" style="left:496.50px;top:1062px;line-height:20px;font-size:17.8px;color:#212529;font-weight:normal;font-style:normal;letter-spacing:0.98px;">Bollettino postale</div>
<div class="t" style="right:1388.82px;top:1062px;line-height:20px;font-size:17.8px;color:#212529;font-weight:normal;font-style:normal;letter-spacing:0.98px;">0,00</div>
<div class="t" style="right:1226.35px;top:1062px;line-height:20px;font-size:17.8px;color:#212529;font-weight:normal;font-style:normal;letter-spacing:0.95px;">69,65</div>
<div class="t" style="right:1064.32px;top:1062px;line-height:20px;font-size:17.8px;color:#212529;font-weight:normal;font-style:normal;letter-spacing:0.98px;">0,00</div>
<div class="t" style="right:902.59px;top:1062px;line-height:20px;font-size:17.8px;color:#212529;font-weight:normal;font-style:normal;letter-spacing:0.91px;">119,84</div>
<div class="r" style="left:1984.3px;top:1049px;width:43.700000000000045px;height:45px;background:#f0f0ef;border-radius:8px"></div>
<svg class="i" style="left:1997px;top:1062.5px;" width="18" height="17" viewBox="0 0 18 17"><rect x="1.3" y="1.2" width="5" height="3.8" fill="none" stroke="#707070" stroke-width="1.2"/><rect x="3.3" y="6.5" width="5.5" height="4" fill="#707070"/><rect x="1.3" y="12" width="5" height="3.8" fill="none" stroke="#707070" stroke-width="1.2"/><path d="M11.8 6.2 L16.6 10.6 M16.6 6.2 L11.8 10.6" stroke="#707070" stroke-width="1.1"/></svg>
<div class="r" style="left:80px;top:1098px;width:2751px;height:54px;background:#ffffff;"></div>
<div class="t" style="left:89.50px;top:1116px;line-height:20px;font-size:17.8px;color:#212529;font-weight:normal;font-style:normal;letter-spacing:0.30px;">9</div>
<div class="t" style="left:163.50px;top:1116px;line-height:20px;font-size:17.8px;color:#212529;font-weight:normal;font-style:normal;letter-spacing:1.52px;">08/12/2024</div>
<div class="t" style="right:2389.87px;top:1116px;line-height:20px;font-size:17.8px;color:#212529;font-weight:normal;font-style:normal;letter-spacing:0.93px;">189,49</div>
<div class="t" style="left:496.50px;top:1116px;line-height:20px;font-size:17.8px;color:#212529;font-weight:normal;font-style:normal;letter-spacing:0.98px;">Bollettino postale</div>
<div class="t" style="right:1388.82px;top:1116px;line-height:20px;font-size:17.8px;color:#212529;font-weight:normal;font-style:normal;letter-spacing:0.98px;">0,00</div>
<div class="t" style="right:1226.35px;top:1116px;line-height:20px;font-size:17.8px;color:#212529;font-weight:normal;font-style:normal;letter-spacing:0.95px;">69,65</div>
<div class="t" style="right:1064.32px;top:1116px;line-height:20px;font-size:17.8px;color:#212529;font-weight:normal;font-style:normal;letter-spacing:0.98px;">0,00</div>
<div class="t" style="right:902.59px;top:1116px;line-height:20px;font-size:17.8px;color:#212529;font-weight:normal;font-style:normal;letter-spacing:0.91px;">119,84</div>
<div class="r" style="left:1984.3px;top:1103px;width:43.700000000000045px;height:45px;background:#f0f0ef;border-radius:8px"></div>
<svg class="i" style="left:1997px;top:1116.5px;" width="18" height="17" viewBox="0 0 18 17"><rect x="1.3" y="1.2" width="5" height="3.8" fill="none" stroke="#707070" stroke-width="1.2"/><rect x="3.3" y="6.5" width="5.5" height="4" fill="#707070"/><rect x="1.3" y="12" width="5" height="3.8" fill="none" stroke="#707070" stroke-width="1.2"/><path d="M11.8 6.2 L16.6 10.6 M16.6 6.2 L11.8 10.6" stroke="#707070" stroke-width="1.1"/></svg>
<div class="r" style="left:80px;top:1152px;width:2751px;height:54px;background:#f4f4f4;"></div>
<div class="t" style="left:89.50px;top:1170px;line-height:20px;font-size:17.8px;color:#212529;font-weight:normal;font-style:normal;letter-spacing:0.30px;">10</div>
<div class="t" style="left:163.50px;top:1170px;line-height:20px;font-size:17.8px;color:#212529;font-weight:normal;font-style:normal;letter-spacing:1.52px;">08/01/2025</div>
<div class="t" style="right:2389.87px;top:1170px;line-height:20px;font-size:17.8px;color:#212529;font-weight:normal;font-style:normal;letter-spacing:0.93px;">189,49</div>
<div class="t" style="left:496.50px;top:1170px;line-height:20px;font-size:17.8px;color:#212529;font-weight:normal;font-style:normal;letter-spacing:0.98px;">Bollettino postale</div>
<div class="t" style="right:1388.82px;top:1170px;line-height:20px;font-size:17.8px;color:#212529;font-weight:normal;font-style:normal;letter-spacing:0.98px;">0,00</div>
<div class="t" style="right:1226.35px;top:1170px;line-height:20px;font-size:17.8px;color:#212529;font-weight:normal;font-style:normal;letter-spacing:0.95px;">69,65</div>
<div class="t" style="right:1064.32px;top:1170px;line-height:20px;font-size:17.8px;color:#212529;font-weight:normal;font-style:normal;letter-spacing:0.98px;">0,00</div>
<div class="t" style="right:902.59px;top:1170px;line-height:20px;font-size:17.8px;color:#212529;font-weight:normal;font-style:normal;letter-spacing:0.91px;">119,84</div>
<div class="r" style="left:1984.3px;top:1157px;width:43.700000000000045px;height:45px;background:#f0f0ef;border-radius:8px"></div>
<svg class="i" style="left:1997px;top:1170.5px;" width="18" height="17" viewBox="0 0 18 17"><rect x="1.3" y="1.2" width="5" height="3.8" fill="none" stroke="#707070" stroke-width="1.2"/><rect x="3.3" y="6.5" width="5.5" height="4" fill="#707070"/><rect x="1.3" y="12" width="5" height="3.8" fill="none" stroke="#707070" stroke-width="1.2"/><path d="M11.8 6.2 L16.6 10.6 M16.6 6.2 L11.8 10.6" stroke="#707070" stroke-width="1.1"/></svg>
<div class="r" style="left:80px;top:1206px;width:2751px;height:54px;background:#ffffff;"></div>
<div class="t" style="left:89.50px;top:1224px;line-height:20px;font-size:17.8px;color:#212529;font-weight:normal;font-style:normal;letter-spacing:0.30px;">11</div>
<div class="t" style="left:163.50px;top:1224px;line-height:20px;font-size:17.8px;color:#212529;font-weight:normal;font-style:normal;letter-spacing:1.52px;">08/02/2025</div>
<div class="t" style="right:2389.87px;top:1224px;line-height:20px;font-size:17.8px;color:#212529;font-weight:normal;font-style:normal;letter-spacing:0.93px;">189,49</div>
<div class="t" style="left:496.50px;top:1224px;line-height:20px;font-size:17.8px;color:#212529;font-weight:normal;font-style:normal;letter-spacing:0.98px;">Bollettino postale</div>
<div class="t" style="right:1388.82px;top:1224px;line-height:20px;font-size:17.8px;color:#212529;font-weight:normal;font-style:normal;letter-spacing:0.98px;">0,00</div>
<div class="t" style="right:1226.35px;top:1224px;line-height:20px;font-size:17.8px;color:#212529;font-weight:normal;font-style:normal;letter-spacing:0.95px;">69,65</div>
<div class="t" style="right:1064.32px;top:1224px;line-height:20px;font-size:17.8px;color:#212529;font-weight:normal;font-style:normal;letter-spacing:0.98px;">0,00</div>
<div class="t" style="right:902.59px;top:1224px;line-height:20px;font-size:17.8px;color:#212529;font-weight:normal;font-style:normal;letter-spacing:0.91px;">119,84</div>
<div class="r" style="left:1984.3px;top:1211px;width:43.700000000000045px;height:45px;background:#f0f0ef;border-radius:8px"></div>
<svg class="i" style="left:1997px;top:1224.5px;" width="18" height="17" viewBox="0 0 18 17"><rect x="1.3" y="1.2" width="5" height="3.8" fill="none" stroke="#707070" stroke-width="1.2"/><rect x="3.3" y="6.5" width="5.5" height="4" fill="#707070"/><rect x="1.3" y="12" width="5" height="3.8" fill="none" stroke="#707070" stroke-width="1.2"/><path d="M11.8 6.2 L16.6 10.6 M16.6 6.2 L11.8 10.6" stroke="#707070" stroke-width="1.1"/></svg>
<div class="r" style="left:80px;top:1260px;width:2751px;height:54px;background:#f4f4f4;"></div>
<div class="t" style="left:89.50px;top:1278px;line-height:20px;font-size:17.8px;color:#212529;font-weight:normal;font-style:normal;letter-spacing:0.30px;">12</div>
<div class="t" style="left:163.50px;top:1278px;line-height:20px;font-size:17.8px;color:#212529;font-weight:normal;font-style:normal;letter-spacing:1.52px;">08/03/2025</div>
<div class="t" style="right:2389.87px;top:1278px;line-height:20px;font-size:17.8px;color:#212529;font-weight:normal;font-style:normal;letter-spacing:0.93px;">189,48</div>
<div class="t" style="left:496.50px;top:1278px;line-height:20px;font-size:17.8px;color:#212529;font-weight:normal;font-style:normal;letter-spacing:0.98px;">Bollettino postale</div>
<div class="t" style="right:1388.82px;top:1278px;line-height:20px;font-size:17.8px;color:#212529;font-weight:normal;font-style:normal;letter-spacing:0.98px;">0,00</div>
<div class="t" style="right:1226.35px;top:1278px;line-height:20px;font-size:17.8px;color:#212529;font-weight:normal;font-style:normal;letter-spacing:0.95px;">69,63</div>
<div class="t" style="right:1064.32px;top:1278px;line-height:20px;font-size:17.8px;color:#212529;font-weight:normal;font-style:normal;letter-spacing:0.98px;">0,00</div>
<div class="t" style="right:902.59px;top:1278px;line-height:20px;font-size:17.8px;color:#212529;font-weight:normal;font-style:normal;letter-spacing:0.91px;">119,85</div>
<div class="r" style="left:1984.3px;top:1265px;width:43.700000000000045px;height:45px;background:#f0f0ef;border-radius:8px"></div>
<svg class="i" style="left:1997px;top:1278.5px;" width="18" height="17" viewBox="0 0 18 17"><rect x="1.3" y="1.2" width="5" height="3.8" fill="none" stroke="#707070" stroke-width="1.2"/><rect x="3.3" y="6.5" width="5.5" height="4" fill="#707070"/><rect x="1.3" y="12" width="5" height="3.8" fill="none" stroke="#707070" stroke-width="1.2"/><path d="M11.8 6.2 L16.6 10.6 M16.6 6.2 L11.8 10.6" stroke="#707070" stroke-width="1.1"/></svg>
<div class="r" style="left:80px;top:1314px;width:2751px;height:2px;background:#dee2e6;"></div>
<div class="r" style="left:80px;top:1316px;width:2751px;height:45px;background:#f7f8fa;"></div>
<div class="t" style="left:89.50px;top:1330px;line-height:20px;font-size:17.8px;color:#212529;font-weight:bold;font-style:normal;letter-spacing:0.59px;">TOT:</div>
<div class="t" style="left:352.50px;top:1330px;line-height:20px;font-size:17.8px;color:#212529;font-weight:bold;font-style:normal;letter-spacing:1.68px;">2.273,87</div>
<div class="t" style="left:1353.00px;top:1330px;line-height:20px;font-size:17.8px;color:#212529;font-weight:bold;font-style:normal;letter-spacing:1.96px;">0,00</div>
<div class="t" style="left:1497.50px;top:1330px;line-height:20px;font-size:17.8px;color:#212529;font-weight:bold;font-style:normal;letter-spacing:2.02px;">835,78</div>
<div class="t" style="left:1660.00px;top:1330px;line-height:20px;font-size:17.8px;color:#212529;font-weight:bold;font-style:normal;letter-spacing:1.96px;">0,00</div>
<div class="t" style="left:1822.00px;top:1330px;line-height:20px;font-size:17.8px;color:#212529;font-weight:bold;font-style:normal;letter-spacing:1.93px;">1.438,09</div>
<div class="r" style="left:152px;top:619px;width:2px;height:742px;background:#dee2e6;"></div>
<div class="r" style="left:341px;top:619px;width:2px;height:742px;background:#dee2e6;"></div>
<div class="r" style="left:485px;top:619px;width:2px;height:742px;background:#dee2e6;"></div>
<div class="r" style="left:1341.5px;top:619px;width:2.0px;height:742px;background:#dee2e6;"></div>
<div class="r" style="left:1486px;top:619px;width:2px;height:742px;background:#dee2e6;"></div>
<div class="r" style="left:1648.5px;top:619px;width:2.0px;height:742px;background:#dee2e6;"></div>
<div class="r" style="left:1810.5px;top:619px;width:2.0px;height:742px;background:#dee2e6;"></div>
<div class="r" style="left:1972.3px;top:619px;width:2.0px;height:742px;background:#dee2e6;"></div>
<div class="r" style="left:40px;top:1506px;width:2786px;height:100px;background:#fff;z-index:5;box-shadow:0 0 70px rgba(0,0,0,0.15)"></div>
</body></html>
